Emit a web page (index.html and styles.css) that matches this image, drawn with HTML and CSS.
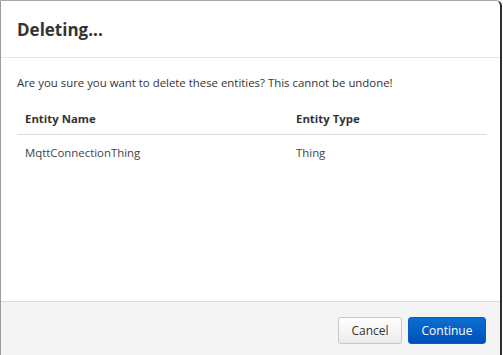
FILE: index.html
```html
<!DOCTYPE html>
<html lang="en">
<head>
    <meta charset="UTF-8">
    <title>Deleting...</title>
    <link rel="stylesheet" href="styles.css">
</head>
<body>
    <div class="dialog">
        <div class="dialog-header">
            <h2 class="dialog-title">Deleting...</h2>
        </div>
        <div class="dialog-body">
            <p class="dialog-message">Are you sure you want to delete these entities? This cannot be undone!</p>
            <table class="entity-table">
                <thead>
                    <tr>
                        <th class="col-name">Entity Name</th>
                        <th>Entity Type</th>
                    </tr>
                </thead>
                <tbody>
                    <tr>
                        <td>MqttConnectionThing</td>
                        <td>Thing</td>
                    </tr>
                </tbody>
            </table>
        </div>
        <div class="dialog-footer">
            <button class="btn btn-default">Cancel</button>
            <button class="btn btn-primary">Continue</button>
        </div>
    </div>
</body>
</html>
```

FILE: styles.css
```css
* {
    margin: 0;
    padding: 0;
    box-sizing: border-box;
}

body {
    font-family: 'Open Sans', 'Noto Sans', sans-serif;
    font-size: 11.4px;
    color: #333;
    background: #fff;
    width: 503px;
    height: 355px;
    overflow: hidden;
}

.dialog {
    width: 502px;
    height: 356px;
    display: flex;
    flex-direction: column;
    border-left: 1px solid #9c9c9c;
    border-top: 1px solid #a6a6a6;
    border-right: 2px solid #2e2e2e;
    border-top-right-radius: 6px;
    background: #fff;
}

.dialog-header {
    height: 57px;
    padding: 17px 16px 0;
    border-bottom: 1px solid #e6e6e6;
}

.dialog-title {
    font-size: 17px;
    font-weight: 700;
    color: #333;
    line-height: 24px;
}

.dialog-body {
    flex: 1;
    padding: 17px 16px 0;
}

.dialog-message {
    line-height: 16px;
    color: #333;
}

.entity-table {
    width: 470px;
    margin-top: 16px;
    border-collapse: collapse;
}

.entity-table th {
    text-align: left;
    font-weight: 700;
    color: #333;
    padding: 4px 8px 7px;
    border-bottom: 1px solid #dcdcdc;
    line-height: 16px;
}

.entity-table .col-name {
    width: 271px;
}

.entity-table td {
    color: #444;
    padding: 10px 8px;
    line-height: 16px;
}

.dialog-footer {
    height: 55px;
    display: flex;
    align-items: flex-start;
    justify-content: flex-end;
    gap: 6px;
    padding: 15px 14px 0;
    background: #f4f4f4;
    border-top: 1px solid #dadada;
}

.btn {
    height: 27px;
    font-family: inherit;
    font-size: 12px;
    border-radius: 3px;
    cursor: pointer;
}

.btn-default {
    width: 64px;
    color: #333;
    background: linear-gradient(to bottom, #ffffff, #ececec);
    border: 1px solid #c8c8c8;
}

.btn-primary {
    width: 78px;
    color: #fff;
    background: linear-gradient(to bottom, #0a6fd2, #0050ba);
    border: 1px solid #0a5bc0;
}
```
